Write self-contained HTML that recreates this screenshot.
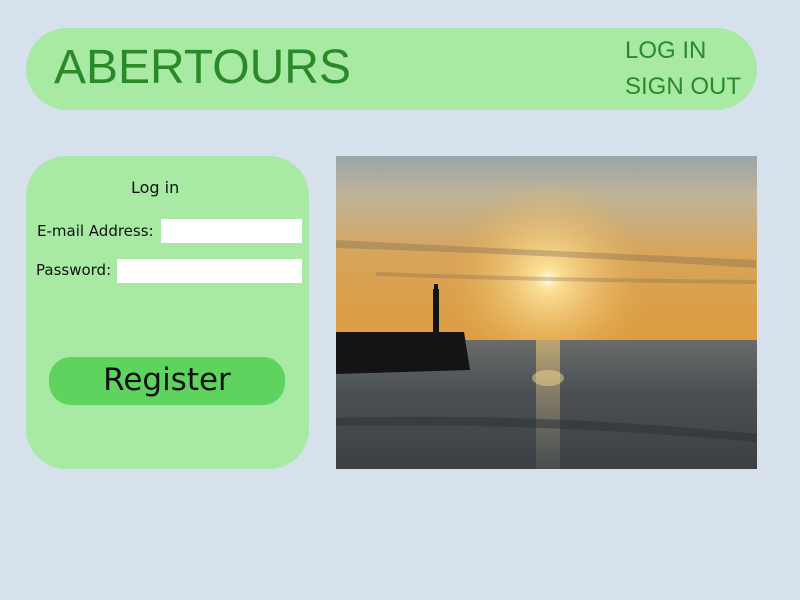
<!DOCTYPE html>
<html><head><style>
body{margin:0;width:800px;height:600px;background:#d6e1ec;position:relative;overflow:hidden;font-family:"DejaVu Sans","Liberation Sans",sans-serif}
.hdr{position:absolute;left:26px;top:28px;width:731px;height:82px;background:#a8eaa4;border-radius:41px}
.logo{position:absolute;left:28px;top:12px;font-size:48px;color:#2a8a2a;font-family:"Liberation Sans",sans-serif}
.nav{position:absolute;left:599px;font-size:24px;color:#2a8a2a;font-family:"Liberation Sans",sans-serif}
.panel{position:absolute;left:26px;top:156px;width:283px;height:313px;background:#a8eaa4;border-radius:40px}
.t{position:absolute;font-size:15px;color:#111}
.in{position:absolute;background:#fff;height:24px}
.btn{position:absolute;left:23px;top:201px;width:236px;height:48px;background:#5ed35e;border-radius:22px;text-align:center;font-size:31px;line-height:46px;color:#111}
</style></head><body>
<div class="hdr"><div class="logo">ABERTOURS</div><div class="nav" style="top:9px">LOG IN</div><div class="nav" style="top:45px">SIGN OUT</div></div>
<div class="panel">
<div class="t" style="left:105px;top:22px;font-size:16px">Log in</div>
<div class="t" style="left:11px;top:66px">E-mail Address:</div>
<div class="in" style="left:135px;top:63px;width:141px"></div>
<div class="t" style="left:10px;top:105px">Password:</div>
<div class="in" style="left:91px;top:103px;width:185px"></div>
<div class="btn">Register</div>
</div>
<svg style="position:absolute;left:336px;top:156px" width="421" height="313" viewBox="0 0 421 313">
<defs>
<linearGradient id="sky" x1="0" y1="0" x2="0" y2="1">
<stop offset="0" stop-color="#9aa4a8"/><stop offset="0.2" stop-color="#bdb49a"/><stop offset="0.55" stop-color="#d8a458"/><stop offset="1" stop-color="#dd9c40"/></linearGradient>
<radialGradient id="sun" cx="212" cy="123" r="100" gradientUnits="userSpaceOnUse">
<stop offset="0" stop-color="#fffbe0"/><stop offset="0.12" stop-color="#ffe7a0" stop-opacity="0.9"/><stop offset="1" stop-color="#e8b050" stop-opacity="0"/></radialGradient>
<linearGradient id="sea" x1="0" y1="0" x2="0" y2="1">
<stop offset="0" stop-color="#6a6c6a"/><stop offset="0.4" stop-color="#4a5054"/><stop offset="1" stop-color="#3a4044"/></linearGradient>
<linearGradient id="glit" x1="0" y1="0" x2="0" y2="1"><stop offset="0" stop-color="#f0c870" stop-opacity="0.6"/><stop offset="1" stop-color="#c0b8a0" stop-opacity="0.1"/></linearGradient>
</defs>
<rect width="421" height="185" fill="url(#sky)"/>
<rect width="421" height="185" fill="url(#sun)"/>
<path d="M0 84 Q150 92 420 104 L420 112 Q200 98 0 92Z" fill="#7a6850" opacity="0.35"/>
<path d="M40 116 Q200 122 420 124 L420 128 Q200 126 40 120Z" fill="#7a6850" opacity="0.3"/>
<rect y="184" width="421" height="129" fill="url(#sea)"/>
<rect x="200" y="184" width="24" height="129" fill="url(#glit)"/>
<ellipse cx="212" cy="222" rx="16" ry="8" fill="#f4d890" opacity="0.5"/>
<path d="M0 262 Q200 256 421 278 L421 286 Q200 266 0 270Z" fill="#2a3034" opacity="0.5"/>
<path d="M0 176 L128 176 L134 214 L0 218Z" fill="#141414"/>
<rect x="97" y="133" width="6" height="45" fill="#141414"/>
<rect x="98" y="128" width="4" height="6" fill="#141414"/>
</svg>
</body></html>
